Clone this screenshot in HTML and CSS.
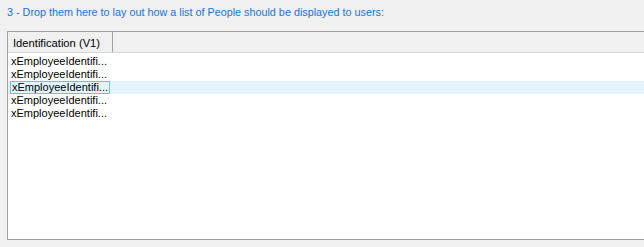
FILE: index.html
```html
<!DOCTYPE html>
<html lang="en">
<head>
    <meta charset="UTF-8">
    <title>People List Layout</title>
    <link rel="stylesheet" href="styles.css">
</head>
<body>
    <div class="panel">
        <div class="hint">3 - Drop them here to lay out how a list of People should be displayed to users:</div>

        <div class="list-view">
            <div class="list-header">
                <div class="column-header">Identification (V1)</div>
            </div>
            <div class="list-rows">
                <div class="list-row">xEmployeeIdentifi...</div>
                <div class="list-row">xEmployeeIdentifi...</div>
                <div class="list-row selected"><span class="focus">xEmployeeIdentifi...</span></div>
                <div class="list-row">xEmployeeIdentifi...</div>
                <div class="list-row">xEmployeeIdentifi...</div>
            </div>
        </div>
    </div>
</body>
</html>
```

FILE: styles.css
```css
body {
    margin: 0;
    padding: 0;
    background-color: #f0f0f0;
    font-family: 'Liberation Sans', Arial, sans-serif;
    font-size: 11.5px;
    color: #000;
    overflow: hidden;
}
.panel {
    padding: 4px 0 0 7px;
}
.hint {
    color: #1a73d9;
    font-size: 10.8px;
    line-height: 16px;
    height: 16px;
    margin-bottom: 11px;
    white-space: nowrap;
}
.list-view {
    height: 207px;
    border: 1px solid #a0a0a0;
    border-right: none;
    margin-right: -2px;
    background-color: #fff;
}
.list-header {
    display: flex;
    height: 20px;
    background-color: #f0f0f0;
    border-bottom: 1px solid #d5d5d5;
}
.column-header {
    width: 99px;
    padding-left: 5px;
    line-height: 22px;
    font-size: 11.2px;
    border-right: 1px solid #a0a0a0;
    white-space: nowrap;
}
.list-rows {
    padding-top: 2px;
}
.list-row {
    height: 13px;
    line-height: 13px;
    font-size: 11px;
    padding-left: 3px;
    white-space: nowrap;
}
.list-row.selected {
    background-color: #e5f3fb;
    padding-left: 2px;
}
.focus {
    display: inline-block;
    box-sizing: border-box;
    height: 13px;
    line-height: 11px;
    padding: 0 1px;
    border: 1px solid #7ab8e8;
    width: 100px;
}
```
